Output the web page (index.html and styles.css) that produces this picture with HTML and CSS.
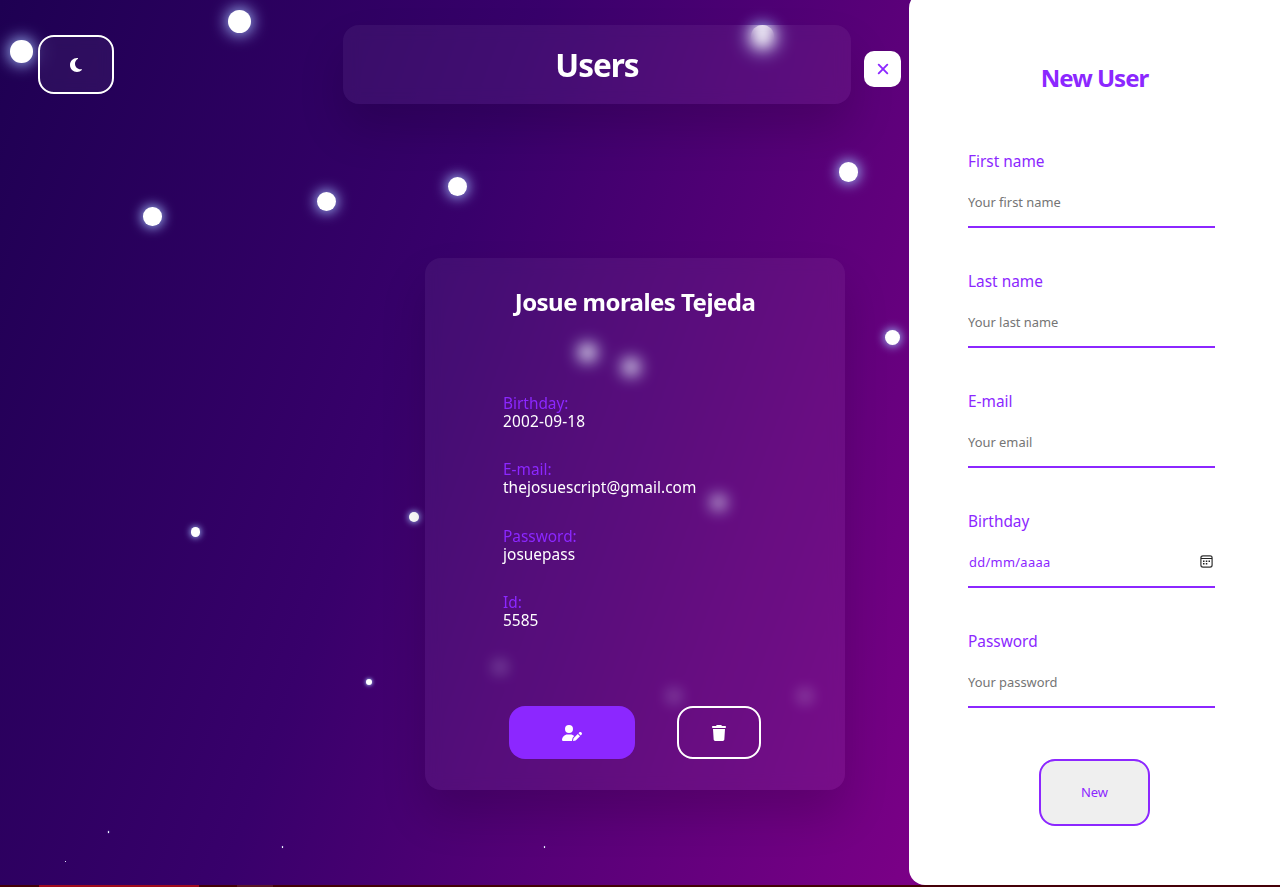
FILE: index.html
```html
<!DOCTYPE html>
<html lang="en">
<head>
<meta charset="utf-8">
<title>Users</title>
<link rel="stylesheet" href="styles.css">
</head>
<body>
<div class="app">
  <div class="sky" id="sky"></div>
  <main class="content">
    <header class="topbar">
      <button class="theme" aria-label="Dark mode">
        <svg width="14" height="16" viewBox="0 0 384 512"><path fill="#fff" d="M223.500 32C100 32 0 132.300 0 256S100 480 223.500 480c60.600 0 115.500-24.200 155.800-63.400 5-4.900 6.300-12.500 3.100-18.700s-10.100-9.700-17-8.500c-9.800 1.700-19.800 2.600-30.100 2.600-96.900 0-175.500-78.800-175.500-176 0-65.800 36-123.100 89.300-153.300 6.100-3.500 9.200-10.500 7.700-17.300s-7.300-11.900-14.300-12.500c-6.300-.5-12.600-.8-19-.8z"/></svg>
      </button>
      <div class="title"><h1>Users</h1></div>
      <button class="close" aria-label="Close">
        <svg width="12" height="12" viewBox="0 0 12 12"><path d="M1.700 1.700l8.600 8.600M10.300 1.700l-8.600 8.600" stroke="#8c27ff" stroke-width="1.900" stroke-linecap="round"/></svg>
      </button>
    </header>
    <article class="card">
      <h2>Josue morales Tejeda</h2>
      <dl>
        <div><dt>Birthday:</dt><dd class="digits">2002-09-18</dd></div>
        <div><dt>E-mail:</dt><dd>thejosuescript@gmail.com</dd></div>
        <div><dt>Password:</dt><dd>josuepass</dd></div>
        <div><dt>Id:</dt><dd>5585</dd></div>
      </dl>
      <div class="actions">
        <button class="edit" aria-label="Edit">
          <svg width="20" height="16" viewBox="0 0 640 512"><path fill="#fff" d="M224 256A128 128 0 1 0 224 0a128 128 0 1 0 0 256zm-45.700 48C79.800 304 0 383.800 0 482.300 0 498.700 13.300 512 29.700 512h293.100c-3.100-8.800-3.700-18.400-1.400-27.800l15-60.100c2.800-11.300 8.600-21.500 16.800-29.700l40.300-40.300c-32.100-31-75.700-50.100-123.900-50.100zm435.500-68.300c-15.600-15.600-40.900-15.600-56.600 0l-29.400 29.400 71 71 29.400-29.400c15.600-15.600 15.600-40.900 0-56.600zM375.900 417c-4.100 4.100-7 9.200-8.400 14.900l-15 60.100c-1.400 5.500.2 11.200 4.200 15.200s9.700 5.600 15.200 4.200l60.100-15c5.600-1.400 10.800-4.300 14.900-8.400l129.300-129.300-71-71z"/></svg>
        </button>
        <button class="remove" aria-label="Delete">
          <svg width="14" height="16" viewBox="0 0 448 512"><path fill="#fff" d="M135.200 17.700L128 32H32C14.300 32 0 46.300 0 64s14.300 32 32 32h384c17.700 0 32-14.300 32-32s-14.300-32-32-32h-96l-7.200-14.300C307.400 6.800 296.300 0 284.200 0H163.800c-12.100 0-23.200 6.800-28.600 17.700zM416 128H32l21.200 339c1.600 25.300 22.600 45 47.900 45h245.800c25.300 0 46.300-19.700 47.900-45z"/></svg>
        </button>
      </div>
    </article>
  </main>
  <form class="panel">
    <h2>New User</h2>
    <div class="field"><label>First name</label><input type="text" placeholder="Your first name"></div>
    <div class="field"><label>Last name</label><input type="text" placeholder="Your last name"></div>
    <div class="field"><label>E-mail</label><input type="text" placeholder="Your email"></div>
    <div class="field"><label>Birthday</label>
      <div class="date"><span>dd/mm/aaaa</span>
        <svg width="13" height="13" viewBox="0 0 13 13"><rect x=".9" y=".9" width="11.200" height="11.200" rx="2" fill="none" stroke="#333" stroke-width="1.200"/><path d="M1 3.500h11" stroke="#222"/><path fill="#222" d="M3 5.500h1.500V7H3zM5.800 5.500h1.500V7H5.800zM8.500 5.500H10V7H8.500zM3 8h1.500v1.500H3zM5.800 8h1.500v1.500H5.800z"/></svg>
      </div>
    </div>
    <div class="field"><label>Password</label><input type="text" placeholder="Your password"></div>
    <button type="button" class="submit">New</button>
  </form>
</div>
<footer class="strip"><i class="red"></i><i class="grey"></i></footer>
<script src="stars.js"></script>
</body>
</html>
```

FILE: stars.js
```
// x, y, diameter of every star on the canvas
const stars = [
  [21.500, 51.500, 22.500], [239.500, 21.500, 23.500], [762, 36, 23],
  [152.500, 216.500, 18.500], [326.500, 201.500, 19], [457.500, 186.500, 19], [848.500, 172, 19.500],
  [892.500, 337, 15], [587, 352, 15], [631, 367, 14.500], [718, 502, 11],
  [195.500, 532, 9.500], [413.500, 517, 10], [369, 682, 6],
  [500, 667, 6.500], [674, 696, 5.500], [805, 696, 5.500],
  [108.500, 832, 1.700], [282.500, 847, 1.300], [544.500, 847, 1.300], [65.500, 861.500, 1]
];
const sky = document.getElementById('sky');
for (const [x, y, d] of stars) {
  const s = document.createElement('i');
  s.className = 'star';
  s.style.cssText = `left:${x - d / 2}px;top:${y - d / 2}px;width:${d}px;height:${d}px;--k:${d / 23}`;
  sky.append(s);
}
```

FILE: styles.css
```css
* { box-sizing: border-box; margin: 0; padding: 0; }
body { font-family: "Noto Sans", "Open Sans", sans-serif; font-size: 15.400px; height: 887px; overflow: hidden; background: #450008; }
button { font: inherit; display: flex; align-items: center; justify-content: center; }
.app { position: relative; height: 885px; overflow: hidden; background: linear-gradient(110deg, #1e0052 0%, #38006b 34%, #7e0088 79%, #800080 100%); }
.sky { position: absolute; inset: 0; }
.star { position: absolute; border-radius: 50%; background: #fff; box-shadow: 0 0 calc(15px * var(--k)) calc(2px * var(--k)) #9db4f5; }
.content { width: 909px; }
.topbar { display: flex; align-items: flex-start; padding: 25px 8px 0 38px; }
.theme, .title, .card { border-radius: 16px; background: rgba(255,255,255,.05); backdrop-filter: blur(7.500px); box-shadow: 0 25px 45px rgba(0,0,0,.15); }
.theme { width: 76px; height: 59px; margin-top: 10px; border: 2px solid #fff; box-shadow: none; }
.title { width: 508px; height: 79px; margin-left: 229px; display: flex; align-items: center; justify-content: center; }
h1 { font-size: 31.500px; line-height: 40px; letter-spacing: -1px; color: #fff; }
.close { width: 37px; height: 36px; margin: 26px 0 0 13px; border: 0; border-radius: 10px; background: #fff; position: relative; z-index: 1; }
.card { width: 420px; height: 532px; margin: 154px 0 0 425px; padding-top: 28px; color: #fff; }
.card h2 { text-align: center; font-size: 24px; line-height: 32px; letter-spacing: -.55px; }
dl { padding: 77px 78px 0; display: flex; flex-direction: column; gap: 30.300px; }
dt, dd { line-height: 18px; height: 18px; }
dt { color: #8c27ff; }
dd { letter-spacing: .05px; }
.digits { letter-spacing: .2px; }
.actions { display: flex; gap: 42px; padding: 76px 0 0 84px; }
.edit { width: 126px; height: 53px; border: 0; border-radius: 16px; background: #8c27ff; }
.remove { width: 84px; height: 53px; border: 2px solid #fff; border-radius: 16px; background: none; }
.actions svg { margin-top: 1px; }
.panel { position: absolute; left: 909px; top: -8px; width: 371px; height: 893px; background: #fff; border-radius: 16px 0 0 16px; padding: 70px 65px 0 59px; color: #8c27ff; }
.panel h2 { text-align: center; font-size: 24px; line-height: 32px; letter-spacing: -1px; margin-right: -6px; }
.field { margin-top: 38.700px; height: 81.300px; display: flex; flex-direction: column; }
.panel h2 + .field { margin-top: 53.200px; }
.field label { line-height: 30px; height: 31px; }
.field input, .date { height: 50px; border: 0; border-bottom: 2px solid #8c27ff; font: 12.900px "Noto Sans", sans-serif; background: none; color: #8c27ff; width: 247px; }
.field input::placeholder { color: #757575; }
.date { display: flex; align-items: center; justify-content: space-between; padding: 0 2px 1px 1px; letter-spacing: .3px; }
.submit { width: 111px; height: 67px; margin: 50.800px auto 0 71px; border: 2px solid #8c27ff; border-radius: 16px; background: #efefef; color: #8c27ff; font-size: 13px; padding-bottom: 2px; }
.strip { height: 2px; display: flex; padding-left: 39px; gap: 38px; }
.red { width: 160px; background: #a00b1c; }
.grey { width: 36px; background: #5a1525; }
```
